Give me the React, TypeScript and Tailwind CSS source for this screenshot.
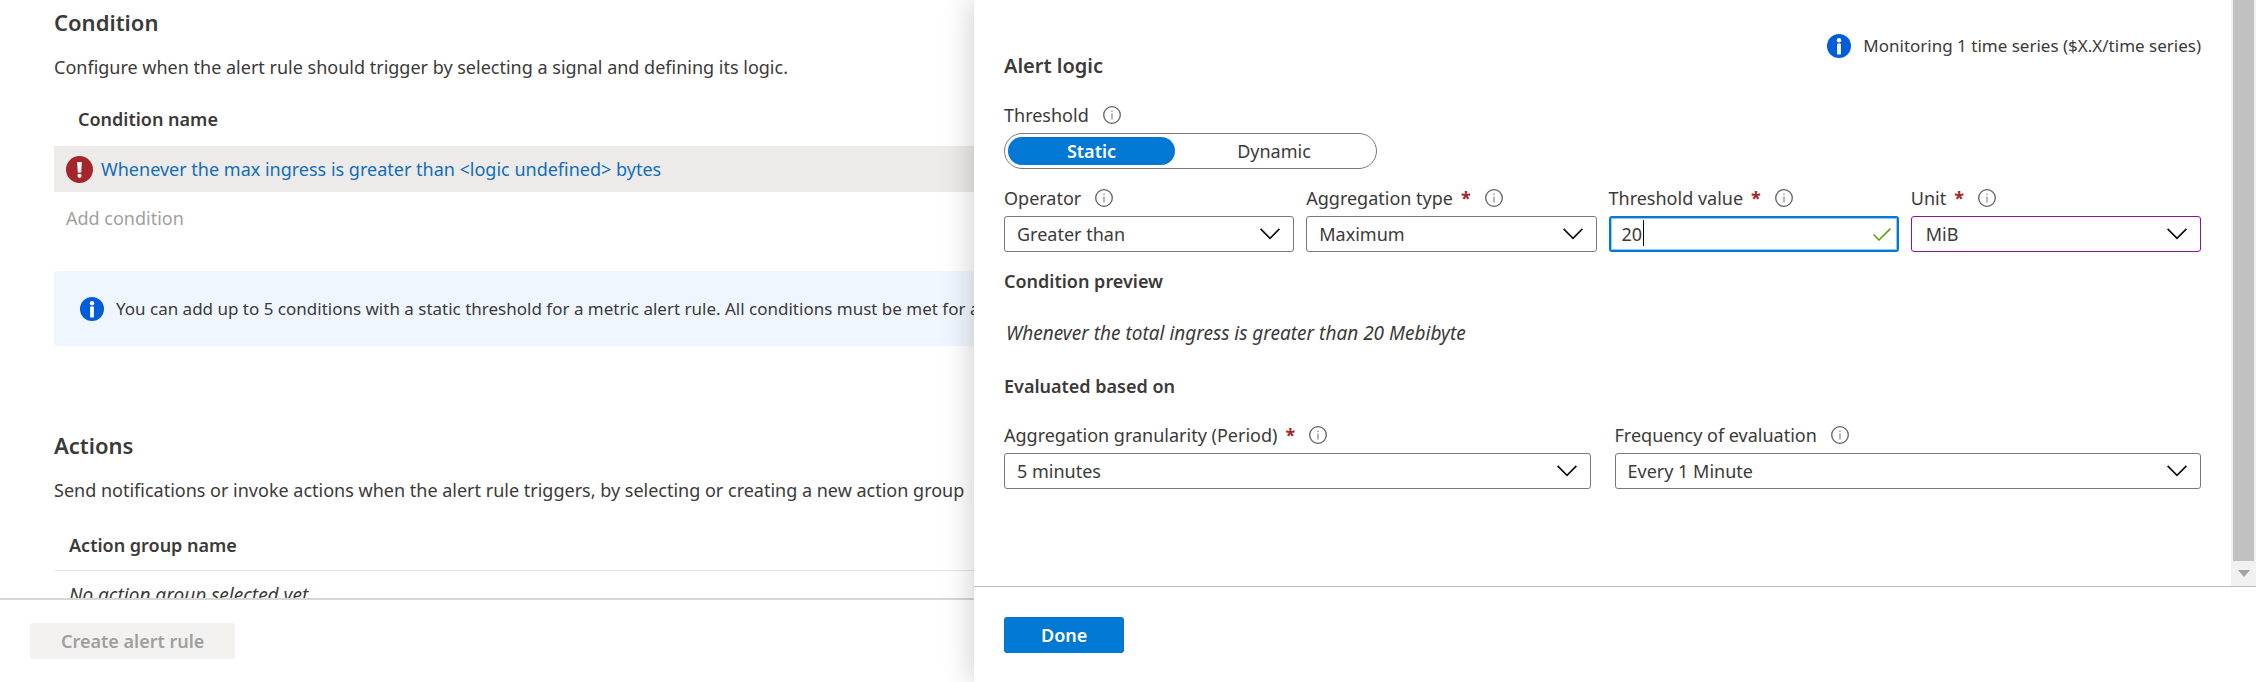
import { useState, type ReactNode } from "react";

function InfoBadge() {
  return (
    <svg viewBox="0 0 24 24" className="size-6 shrink-0" aria-hidden="true">
      <circle cx="12" cy="12" r="12" fill="#015cda" />
      <circle cx="12" cy="6.2" r="2.2" fill="#fff" />
      <rect x="10.1" y="9.6" width="3.8" height="10.8" rx="0.4" fill="#fff" />
    </svg>
  );
}

function ErrorBadge() {
  return (
    <svg viewBox="0 0 27 27" className="size-[27px] shrink-0" aria-hidden="true">
      <circle cx="13.5" cy="13.5" r="13.5" fill="#a4262c" />
      <path d="M11.1 6h4.8l-.7 10.4h-3.4z" fill="#fff" />
      <circle cx="13.5" cy="19.8" r="2.1" fill="#fff" />
    </svg>
  );
}

function InfoHint({ about }: { about: string }) {
  return (
    <button type="button" aria-label={`About ${about}`} className="shrink-0">
      <svg viewBox="0 0 18 18" className="size-[18px]" fill="none" aria-hidden="true">
        <circle cx="9" cy="9" r="8.3" stroke="#605e5c" strokeWidth="1.3" />
        <path d="M9 7.4v6" stroke="#8a8886" strokeWidth="1.2" />
        <circle cx="9" cy="5.2" r="0.8" fill="#8a8886" />
      </svg>
    </button>
  );
}

function Chevron() {
  return (
    <svg
      viewBox="0 0 20 12"
      fill="none"
      className="pointer-events-none absolute top-3 right-3.5 h-3 w-5"
      aria-hidden="true"
    >
      <path d="M0.6 0.8 10 10.4 19.4 0.8" stroke="#111" strokeWidth="1.7" />
    </svg>
  );
}

type FieldProps = { id: string; label: string; required?: boolean; children: ReactNode };

function Field({ id, label, required, children }: FieldProps) {
  return (
    <div className="min-w-0">
      <div className="mb-1.5 flex h-6 items-center gap-3.5">
        <label htmlFor={id} className="whitespace-nowrap">
          {label}
          {required && <span className="ml-2 font-bold text-[#a4262c]">*</span>}
        </label>
        <InfoHint about={label} />
      </div>
      <div className="relative">{children}</div>
    </div>
  );
}

type SelectFieldProps = {
  id: string;
  label: string;
  options: string[];
  required?: boolean;
  accent?: boolean;
};

function SelectField({ id, label, options, required, accent }: SelectFieldProps) {
  return (
    <Field id={id} label={label} required={required}>
      <select
        id={id}
        className={`block h-9 w-full appearance-none rounded-[3px] border bg-white pr-10 outline-none ${
          accent ? "border-[#881798] pl-3.5" : "border-[#7a7877] pl-3"
        }`}
      >
        {options.map((option) => (
          <option key={option}>{option}</option>
        ))}
      </select>
      <Chevron />
    </Field>
  );
}

function ConditionPage() {
  return (
    <div className="flex min-w-0 flex-col overflow-hidden whitespace-nowrap">
      <main className="min-h-0 flex-1 overflow-hidden pt-1.5 pl-[54px]">
        <section>
          <h2 className="text-[22px] leading-8 font-semibold">Condition</h2>
          <p className="mt-[17px] leading-6">
            Configure when the alert rule should trigger by selecting a signal and defining its logic.
          </p>
          <table className="mt-7 w-full text-left">
            <thead>
              <tr>
                <th scope="col" className="pb-[15px] pl-6 leading-6 font-semibold">
                  Condition name
                </th>
              </tr>
            </thead>
            <tbody>
              <tr className="h-[46px] bg-[#edebe9]">
                <td className="pl-3">
                  <div className="flex items-center gap-2">
                    <ErrorBadge />
                    <a href="#condition" className="leading-6 text-[#106ebe]">
                      Whenever the max ingress is greater than &lt;logic undefined&gt; bytes
                    </a>
                  </div>
                </td>
              </tr>
            </tbody>
          </table>
          <button type="button" disabled className="mt-3.5 ml-3 block leading-6 text-[#a19f9d]">
            Add condition
          </button>
          <div className="mt-[41px] flex h-[75px] items-center gap-3 rounded-[3px] bg-[#f0f6ff] pl-[26px] text-[17px]">
            <InfoBadge />
            <p>
              You can add up to 5 conditions with a static threshold for a metric alert rule. All conditions
              must be met for an alert to trigger.
            </p>
          </div>
        </section>
        <section className="pt-[83px]">
          <h2 className="text-[22px] leading-8 font-semibold">Actions</h2>
          <p className="mt-[17px] leading-6">
            Send notifications or invoke actions when the alert rule triggers, by selecting or creating a new
            action group
          </p>
          <table className="mt-[31px] w-full text-left">
            <thead>
              <tr className="border-b border-[#e6e6e6]">
                <th scope="col" className="pb-[13px] pl-[15px] leading-6 font-semibold">
                  Action group name
                </th>
              </tr>
            </thead>
            <tbody>
              <tr>
                <td className="pt-3 pl-[15px] text-[19px] leading-6 italic">No action group selected yet</td>
              </tr>
            </tbody>
          </table>
        </section>
      </main>
      <footer className="h-[84px] shrink-0 border-t-2 border-[#d6d6d6] pt-[23px] pl-[30px]">
        <button
          type="button"
          disabled
          className="h-9 rounded-[3px] bg-[#f3f2f1] px-[31px] font-semibold text-[#a19f9d]"
        >
          Create alert rule
        </button>
      </footer>
    </div>
  );
}

function ThresholdToggle() {
  const [mode, setMode] = useState("Static");
  return (
    <div
      role="radiogroup"
      aria-label="Threshold"
      className="mt-1.5 grid h-9 w-[373px] grid-cols-[167px_1fr] rounded-full border border-[#7a7877] p-[3px]"
    >
      {["Static", "Dynamic"].map((name) => (
        <label
          key={name}
          className={`flex items-center justify-center rounded-full ${
            mode === name ? "bg-[#0078d4] font-semibold text-white" : ""
          }`}
        >
          <input
            type="radio"
            name="threshold"
            value={name}
            checked={mode === name}
            onChange={() => setMode(name)}
            className="sr-only"
          />
          {name}
        </label>
      ))}
    </div>
  );
}

function LogicDrawer() {
  const [value, setValue] = useState("20");
  return (
    <aside className="relative flex min-w-0 flex-col bg-white shadow-[0_0_30px_rgba(0,0,0,0.22)]">
      <div className="flex min-h-0 flex-1">
        <div className="min-w-0 flex-1 overflow-hidden px-[30px] pt-[34px]">
          <div className="flex items-start justify-between">
            <h2 className="mt-4 text-[20px] leading-8 font-semibold">Alert logic</h2>
            <p className="flex items-center gap-3 text-[17px] leading-6">
              <InfoBadge />
              Monitoring 1 time series ($X.X/time series)
            </p>
          </div>
          <div className="mt-[21px] flex h-6 items-center gap-3.5">
            <span>Threshold</span>
            <InfoHint about="threshold" />
          </div>
          <ThresholdToggle />
          <div className="mt-[17px] grid grid-cols-4 gap-3">
            <SelectField id="operator" label="Operator" options={["Greater than", "Less than"]} />
            <SelectField
              id="aggregation"
              label="Aggregation type"
              required
              options={["Maximum", "Minimum", "Average", "Total"]}
            />
            <Field id="value" label="Threshold value" required>
              <input
                id="value"
                type="text"
                value={value}
                onChange={(event) => setValue(event.target.value)}
                className="block h-9 w-full rounded-[3px] border-2 border-[#0078d4] bg-white pr-10 pl-[11px] caret-transparent outline-none inset-ring inset-ring-[#99c9ee]"
              />
              <span className="pointer-events-none absolute top-1 left-[34px] h-[26px] w-px bg-black" />
              <svg
                viewBox="0 0 18 13"
                fill="none"
                className="pointer-events-none absolute top-3 right-2 h-[13px] w-[18px]"
                aria-hidden="true"
              >
                <path d="M0.6 6.4 6 12 17.4 0.6" stroke="#57a300" strokeWidth="1.5" />
              </svg>
            </Field>
            <SelectField id="unit" label="Unit" required accent options={["MiB", "KiB", "GiB", "B"]} />
          </div>
          <h3 className="mt-[15px] leading-7 font-semibold">Condition preview</h3>
          <p className="mt-[26px] pl-0.5 text-[19px] leading-6 italic">
            Whenever the total ingress is greater than 20 Mebibyte
          </p>
          <h3 className="mt-[27px] leading-7 font-semibold">Evaluated based on</h3>
          <div className="mt-[23px] grid grid-cols-2 gap-6">
            <SelectField
              id="period"
              label="Aggregation granularity (Period)"
              required
              options={["5 minutes", "15 minutes", "30 minutes"]}
            />
            <SelectField
              id="frequency"
              label="Frequency of evaluation"
              options={["Every 1 Minute", "Every 5 Minutes"]}
            />
          </div>
        </div>
        <div className="flex w-[25px] flex-col bg-[#f1f1f1]" aria-hidden="true">
          <div className="mx-0.5 flex-1 bg-[#c1c1c1]" />
          <div className="flex h-[25px] items-center justify-center">
            <svg viewBox="0 0 12 7" className="h-[7px] w-3">
              <path d="M0 0h12L6 7z" fill="#a3a3a3" />
            </svg>
          </div>
        </div>
      </div>
      <footer className="h-24 shrink-0 border-t border-[#bdbdbd] pt-[30px] pl-[30px]">
        <button
          type="button"
          className="h-9 rounded-[3px] bg-[#0078d4] px-[37px] font-semibold text-white"
        >
          Done
        </button>
      </footer>
    </aside>
  );
}

export default function App() {
  return (
    <div className="grid h-screen grid-cols-[minmax(0,974fr)_minmax(0,1282fr)] overflow-hidden bg-white font-['Noto_Sans','Open_Sans',sans-serif] text-[18px] text-[#3b3a39]">
      <ConditionPage />
      <LogicDrawer />
    </div>
  );
}
